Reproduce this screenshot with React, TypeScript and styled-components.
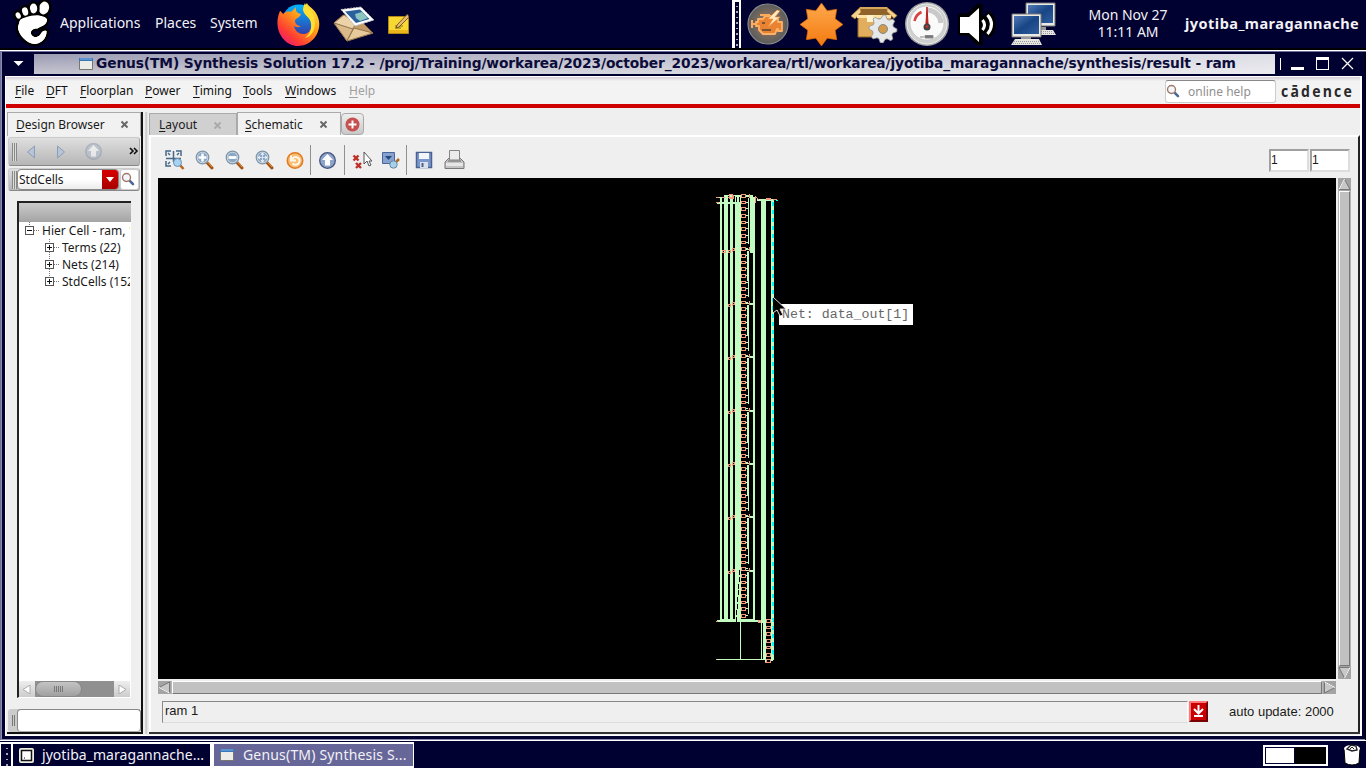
import React from 'react';
import styled, { createGlobalStyle } from 'styled-components';

const navy = '#000031';
const ui = "'Noto Sans', 'Open Sans', sans-serif";
const deja = "'DejaVu Sans', sans-serif";

const Global = createGlobalStyle`
  * { box-sizing: border-box; }
  body { margin: 0; background: ${navy}; overflow: hidden; }
  svg { display: block; flex: none; }
`;

const Desktop = styled.div`
  width: 1366px; height: 768px; display: flex; flex-direction: column;
  background: ${navy}; font-family: ${ui}; color: #1a1a1a; white-space: nowrap;
`;
const TopPanel = styled.header`
  height: 48px; flex: none; display: flex; align-items: center; color: #f2f2f6;
`;
const Space = styled.div<{ $w?: number }>`
  ${p => (p.$w === undefined ? 'flex: 1;' : `flex: none; width: ${p.$w}px;`)}
`;
const PanelItem = styled.span<{ $w: number }>`
  width: ${p => p.$w}px; flex: none; font-size: 14px; line-height: 20px; margin-top: -3px;
`;
const Grip = styled.div`
  width: 9px; height: 48px; border: solid #fff; border-width: 2px 2px 0 3px; flex: none;
  background: repeating-linear-gradient(${navy} 0 4px, #aab 4px 5.5px); background-size: 2px 100%;
  background-repeat: no-repeat; background-position: 1px 0; background-color: ${navy};
`;
const Clock = styled.div`
  width: 86px; text-align: center; font-size: 14px; line-height: 17px; margin-top: -3px;
`;
const User = styled.b`
  width: 181px; font-size: 14.5px; line-height: 20px; margin-top: -3px; letter-spacing: 0.47px;
`;

const Frame = styled.section`
  height: 692px; flex: none; display: flex; flex-direction: column;
  border-top: 2px solid #000; padding: 4px 4px 4px 5px;
  background: ${navy};
  box-shadow: inset 0 1px #fff, inset 1px 2px #6f6f9b, inset -1px 0 #000, inset 2px 0 #8c8cae, inset 0 -1px #8c8cae;
`;
const TitleBar = styled.div`
  height: 20px; flex: none; display: flex; align-items: center;
`;
const TitleStrip = styled.div`
  width: 1241px; flex: none; height: 20px; display: flex; align-items: center; padding-left: 45px;
  background: linear-gradient(90deg, #8d8d9f00, #ffffffa8), linear-gradient(#9c9cb4, #c5c5d0);
  color: #0c0c3a; font: bold 13.8px/20px ${deja};
`;
const TitleText = styled.span`margin: -2px 0 0 3px; letter-spacing: -0.137px;`;
const Client = styled.div`
  flex: 1; min-height: 0; margin-top: 2px; display: flex; flex-direction: column;
  background: #efefef; border: 1px solid #fff; border-width: 1px 2px 1px 1px;
`;
const MenuBar = styled.nav`
  height: 27px; flex: none; display: flex; align-items: center; padding-left: 9px;
  background: linear-gradient(#d6ced8, #f3f3f3 4px);
`;
const Menu = styled.span<{ $w: number; $off?: boolean }>`
  width: ${p => p.$w}px; flex: none; font-size: 12px; line-height: 17px;
  color: ${p => (p.$off ? '#a0a0a0' : '#111')};
  &::first-letter { text-decoration: underline; text-underline-offset: 2px; }
  display: block;
`;
const HelpField = styled.div`
  width: 111px; height: 23px; display: flex; align-items: center; background: #fff; border: 1px solid #ccc;
  border-top: 1px solid #888; border-radius: 3px; color: #909090; font-size: 12px; margin-top: 2px;
`;
const Logo = styled.span`
  width: 84px; padding-left: 5px; display: inline-block; font: bold 16.5px/18px 'Open Sans', sans-serif;
  letter-spacing: 2.6px; color: #282828; transform: scaleX(.85); transform-origin: 5px 0;
`;
const Red = styled.div`height: 4px; flex: none; background: #cf0000;`;
const Panes = styled.div`flex: 1; min-height: 0; display: flex; padding: 4px 0 0 1px;`;
const LeftPane = styled.aside`
  width: 136px; flex: none; display: flex; flex-direction: column; height: 622px; border-right: 2px solid #111;
  border-bottom: 2px solid #111;
`;
const Divider = styled.div`
  width: 6px; flex: none; height: 622px; background: linear-gradient(90deg, #eee 1px, #eee 2px, #bbb 3px, #ddd 4px, #eee 5px);
`;
const Tab = styled.div<{ $w: number; $idle?: boolean; $pad?: string; $h?: number }>`
  width: ${p => p.$w}px; height: ${p => p.$h ?? 24}px; flex: none; display: flex; align-items: center;
  align-self: flex-end; justify-content: space-between; padding: ${p => p.$pad ?? '0 11px 0 8px'}; font-size: 12px; line-height: 18px;
  border: 1px solid #aaa; border-bottom: 0; background: ${p => (p.$idle ? '#d0d0d0' : '#f1f1f1')};
`;
const TabName = styled.span`
  display: block;
  &::first-letter { text-decoration: underline; text-underline-offset: 2px; }
`;
const SideBar = styled.div<{ $h: number }>`
  height: ${p => p.$h}px; flex: none; display: flex; align-items: center; margin: 1px 1px 1px 1px;
  background: linear-gradient(#dedede, #b6b6b6); border: 1px solid #999; border-color: #ccc #aaa #888 #ccc;
  border-radius: 3px; padding-left: 3px;
`;
const Ridge = styled.i`
  width: 5px; height: 18px; flex: none;
  background: repeating-linear-gradient(90deg, #888 0 1px, #ddd 1px 2px);
`;
const Combo = styled.div`
  width: 102px; height: 21px; flex: none; display: flex; border: 1px solid #888; border-radius: 4px; overflow: hidden;
  background: linear-gradient(#fff, #fff 50%, #ececec); font-size: 12px; line-height: 19px; justify-content: space-between;
  padding-left: 1px;
`;
const ComboButton = styled.i`
  width: 16px; background: linear-gradient(#d80000, #a80000); display: flex; align-items: center; justify-content: center;
`;
const FindButton = styled.div`
  width: 19px; height: 21px; margin-left: 1px; background: #fff; border: 1px solid #ccc; border-radius: 3px; flex: none;
`;
const TreeBox = styled.div`
  width: 114px; height: 497px; margin: 9px 0 0 10px; flex: none; display: flex; flex-direction: column;
  border: 2px solid #222; border-width: 2px 0 0 2px; background: #fff; overflow: hidden;
  border-bottom: 1px solid #fff;
`;
const TreeHead = styled.div`height: 19px; flex: none; background: linear-gradient(#cacaca, #a4a4a4);`;
const TreeRow = styled.div<{ $depth: number }>`
  height: 17px; flex: none; display: flex; align-items: center; padding-left: ${p => 5 + p.$depth * 20}px;
  font-size: 12px; line-height: 17px; margin-right: 1px; overflow: hidden;
`;
const TreeScroll = styled.div`
  height: 16px; margin: auto 1px 0 0; display: flex; align-items: stretch; background: #909090;
`;
const ScrollButton = styled.div`
  width: 16px; background: linear-gradient(#eee, #ccc); display: flex; align-items: center; justify-content: center;
`;
const Thumb = styled.div`
  width: 47px; border: 1px solid #888; border-radius: 8px; background: linear-gradient(#c4c4c4, #a0a0a0);
  display: flex; align-items: center; justify-content: center;
`;
const Entry = styled.div`
  display: flex; align-items: center; height: 23px; margin: 11px 0 0 1px; padding-left: 4px;
  background: linear-gradient(90deg, #ccc, #bbb); border-radius: 3px;
`;
const EntryField = styled.div`
  flex: 1; height: 23px; margin-left: 1px; background: #fff; border: 1px solid #888; border-radius: 4px; border-bottom-color: #aaa;
`;

const RightPane = styled.main`
  width: 1211px; flex: none; height: 622px; display: flex; flex-direction: column; border-bottom: 2px solid #333;
`;
const Tabs = styled.div`height: 23px; flex: none; display: flex;`;
const AddTab = styled.div`
  width: 23px; height: 22px; margin: 1px 0 0 0; border: 1px solid #aaa; border-radius: 4px; display: flex; align-items: center;
  justify-content: center; background: linear-gradient(#efefef, #c8c8c8);
`;
const Work = styled.div`
  flex: 1; min-height: 0; border: solid #fff; border-width: 2px 0 0 2px; padding: 0 0 0 7px;
  border-right: 2px solid #222; display: flex; flex-direction: column;
`;
const Tools = styled.div`height: 41px; flex: none; display: flex; align-items: center; padding: 5px 8px 0 6px;`;
const Tool = styled.div<{ $w?: number }>`width: ${p => p.$w ?? 30}px; flex: none;`;
const Rule = styled.div`width: 1px; height: 30px; background: #909090; margin-right: 7px; flex: none;`;
const NumberField = styled.div`
  width: 40px; height: 23px; border: 2px solid #ddd; border-color: #a0a0a0 #ddd #ddd #a0a0a0; background: #fff;
  font: 12px/19px 'Liberation Sans', sans-serif; padding-left: 0; margin-left: 1px;
`;
const CanvasRow = styled.div`display: flex; height: 501px; flex: none;`;
const Canvas = styled.div`width: 1178px; flex: none; height: 501px; background: #000; position: relative;`;
const Tip = styled.div`
  position: absolute; left: 621px; top: 126px; width: 134px; height: 21px; background: #fff; color: #666;
  font: 13.25px/21px 'Liberation Mono', monospace; padding-left: 3px;
`;
const Cursor = styled.svg`position: absolute; left: 614px; top: 118px;`;
const VScroll = styled.div`
  width: 13px; height: 501px; margin-left: 2px; background: #b5b5b5; display: flex; flex-direction: column; justify-content: space-between;
`;
const HScroll = styled.div`
  width: 1178px; height: 13px; margin-top: 2px; background: #b5b5b5; display: flex; justify-content: space-between; flex: none;
`;
const Bar = styled.div`
  flex: 1; background: #c1c1c1; border: 1px solid #fff; border-right-color: #777; border-bottom-color: #777; margin: 0 1px;
`;
const Status = styled.div`
  display: flex; align-items: center; padding: 6px 0 0 4px; height: 29px;
  font: 13px/19px 'Liberation Sans', sans-serif;
`;
const StatusField = styled.div`
  width: 1026px; height: 22px; line-height: 18px; border: 1px solid #999; border-color: #888 #fff #ddd #888; padding-left: 2px;
`;
const Download = styled.div`
  width: 19px; height: 21px; background: #c80000; border: 2px solid #f77; border-color: #f77 #700 #700 #f77; margin: -1px 21px 0 1px;
`;

const Taskbar = styled.footer`
  height: 28px; flex: none; display: flex; align-items: center; border-top: 1px solid #fff; color: #f2f2f6;
  padding-top: 1px;
`;
const TaskGroup = styled.div`
  display: flex; height: 26px; width: 414px; border: 2px solid #fff; border-left-width: 1px; border-right-width: 1px;
`;
const TaskGrip = styled.i`
  width: 12px; flex: none; border-right: 2px solid #fff;
  background: repeating-linear-gradient(${navy} 0 4px, #aab 4px 5.5px) 5px 0 / 2px 100% no-repeat;
`;
const Task = styled.div<{ $w: number; $on?: boolean }>`
  width: ${p => p.$w}px; flex: none; display: flex; align-items: center; gap: ${p => (p.$on ? 9 : 8)}px; padding-left: 6px;
  font-size: 14px; line-height: 20px; letter-spacing: ${p => (p.$on ? 0.18 : 0.05)}px;
  background: ${p => (p.$on ? '#666698' : navy)}; border-left: ${p => (p.$on ? '4px solid #fff' : '0')};
`;
const Pager = styled.div`
  width: 65px; height: 21px; border: 2px solid #fff; display: flex; margin-right: 14px; background: #000;
`;
const PagerWindow = styled.i`width: 30px; background: #fff; border: 1px solid #003; `;

const Foot = () => (
  <svg width="60" height="48" viewBox="0 0 60 48">
    <g stroke="#000" strokeWidth="5" fill="#fff" strokeLinejoin="round" paintOrder="stroke">
      <path d="M20 20C26 15 44 13 47 19.500c0 6-7 7-9.500 9C33 28 30 31 31 34c2 4 6 4 9 1 2-4 4-5 6.500-4C47 38 41 44 34 44 26 43 18 34 18 27z" />
      <ellipse cx="44" cy="8" rx="5" ry="6.500" transform="rotate(15 44 8)" />
      <ellipse cx="33.500" cy="8.500" rx="3.700" ry="5" /><ellipse cx="25" cy="11.500" rx="3" ry="4.200" transform="rotate(-15 25 11)" />
      <ellipse cx="18" cy="15.500" rx="2.400" ry="3.300" transform="rotate(-25 18 15)" />
    </g>
    <path fill="#fff" d="M20 20C26 15 44 13 47 19.500c0 6-7 7-9.500 9C33 28 30 31 31 34c2 4 6 4 9 1 2-4 4-5 6.500-4C47 38 41 44 34 44 26 43 18 34 18 27z" />
  </svg>
);
const Firefox = () => (
  <svg width="44" height="45" viewBox="0 0 44 45">
    <defs>
      <linearGradient id="ff" x1=".9" y1="0" x2=".1" y2="1"><stop offset="0" stopColor="#fff04a" /><stop offset=".4" stopColor="#ff9a16" /><stop offset=".75" stopColor="#ff3a35" /><stop offset="1" stopColor="#e31587" /></linearGradient>
      <linearGradient id="fb" x1="0" y1="0" x2="0" y2="1"><stop offset="0" stopColor="#00b4ff" /><stop offset="1" stopColor="#3a2a9c" /></linearGradient>
    </defs>
    <circle cx="23" cy="20" r="17.500" fill="url(#fb)" />
    <path fill="url(#ff)" d="M4 9c1 0 2 2 3 3 2-2 5-3 8-2l5-5c-1 4 1 6 5 7-1 4-6 4-6 7 0 3 3 5 6 5-3 2-5 1-7 0 1 5 5 8 9 8 6 0 10-5 8-13-1-5-7-5-7-11 0-3 1-5 3-7 1 4 10 6 12 18 2 13-8 25-21 25C8 44-4 27 4 9z" />
    <path fill="#ffdf32" d="M29 1c1 5 10 7 10 20 0 9-5 14-10 15 7-5 7-13 5-18-2-4-6-5-7-10 0-3 1-5 2-7z" />
  </svg>
);
const Mail = () => (
  <svg width="42" height="36" viewBox="0 0 42 36">
    <path d="M1 17L10 9l20 8 10 10-26 8z" fill="#c39b66" stroke="#80603a" />
    <path d="M1 17l10-8 12 8-4 7z" fill="#ecd2a8" stroke="#a58458" />
    <path d="M1 17l13 18 6-12z" fill="#dab98a" stroke="#92754e" />
    <path d="M14 35l7-13 19 5z" fill="#e7c99b" stroke="#92754e" />
    <path d="M8 3.500L28 1l13 13-19 6z" fill="#fff" stroke="#bbb" strokeDasharray="2 1" />
    <path d="M12 5.500L27 3.500l9.500 9.500L23 17z" fill="#2b609c" />
    <path d="M22 8l7-2 6 6-8 3-4-3z" fill="#8cc4bf" />
  </svg>
);
const Note = () => (
  <svg width="22" height="21" viewBox="0 0 22 21"><path d="M.5 2.500h20v17H.500z" fill="#f7d733" stroke="#b28711" /><path d="M1 16h19v3H1z" fill="#edb51c" /><path d="M7 12h8M7 14h6" stroke="#877016" /><path d="M19.500 0L9 11l-1 3 3-1L21 3z" fill="#e8b86d" stroke="#594119" strokeWidth=".8" /></svg>
);
const Engine = () => (
  <svg width="42" height="44" viewBox="0 0 42 44">
    <defs><radialGradient id="en"><stop offset="0" stopColor="#c98a58" /><stop offset=".55" stopColor="#7b6a5e" /><stop offset="1" stopColor="#5a5c5c" /></radialGradient></defs>
    <circle cx="21" cy="22" r="20" fill="url(#en)" stroke="#888" strokeWidth="1.200" />
    <path d="M11 17h5l2-3h7l3 3h3v3h4v9h-4v-2h-1l-2 5H16l-4-4v-4H9v-4h2z" fill="#e98331" stroke="#ffb267" strokeWidth="1.800" strokeLinejoin="round" />
    <path d="M5 18v8M5 22h4M13 13h10" stroke="#ffab5a" strokeWidth="2" fill="none" />
    <path d="M30 8l-9 9h5l-5 8 12-10h-5l5-6z" fill="#ffe9bd" stroke="#f0913f" strokeWidth=".7" /><path d="M15 21h3M15 28h9" stroke="#7a5234" strokeWidth="2" />
  </svg>
);
const Star = () => {
  const pts = Array.from({ length: 16 }, (_, i) => {
    const r = i % 2 ? 14.5 : 21, a = (i * Math.PI) / 8 - Math.PI / 2;
    return `${21 + r * Math.cos(a)},${21 + r * Math.sin(a)}`;
  }).join(' ');
  return <svg width="43" height="43" viewBox="0 0 42 42"><defs><linearGradient id="st" x2="0" y2="1"><stop stopColor="#fda94d" /><stop offset="1" stopColor="#f47a10" /></linearGradient></defs><polygon points={pts} fill="url(#st)" stroke="#d66408" strokeWidth=".7" /></svg>;
};
const gear = (cx: number, cy: number, r: number) => Array.from({ length: 32 }, (_, i) => {
  const rr = i % 4 < 2 ? r : r * 0.76, a = (i * Math.PI) / 16;
  return `${cx + rr * Math.cos(a)},${cy + rr * Math.sin(a)}`;
}).join(' ');
const Package = () => (
  <svg width="48" height="38" viewBox="0 0 48 38">
    <path d="M8 10h33v22H8z" fill="#e0ae5c" stroke="#94651f" /><path d="M10 3h27l5 8H6z" fill="#8f6329" />
    <path d="M10 2.500L1 11l4 3 6-7zM37 2.500l10 8-3 3-7-7z" fill="#f4d28e" stroke="#a7762b" strokeWidth=".8" /><path d="M10 2h27v2H10z" fill="#d6a75b" /><path d="M7 10h34v3H7z" fill="#ffe2a4" /><path d="M17 10h6v7h-6z" fill="#fff2ce" />
    <polygon points={gear(33, 24, 14)} fill="#e6e8ea" stroke="#95989a" strokeWidth=".8" /><circle cx="33" cy="24" r="4.500" fill="#d19b4b" stroke="#85888a" />
  </svg>
);
const Gauge = () => (
  <svg width="46" height="46" viewBox="0 0 46 46"><circle cx="23" cy="23" r="22" fill="#a2a4a4" /><circle cx="23" cy="23" r="20" fill="#cfd1d0" stroke="#eee" /><circle cx="23" cy="22" r="17" fill="#fafafa" stroke="#bbb" strokeWidth=".6" />
    <path d="M24 9a14 14 0 0113 13" stroke="#c9c9c9" strokeWidth="5" fill="none" /><path d="M10.500 20a13 13 0 017-9" stroke="#d8413f" strokeWidth="2.600" fill="none" />
    <path d="M21.700 27L23 6l1.300 21z" fill="#bb1c1c" stroke="#bb1c1c" /><circle cx="23" cy="26" r="3.500" fill="#444" /><circle cx="23" cy="25.500" r="1.500" fill="#b33" /><path d="M21 34.500h8v2.500h-8zM16 36h4" fill="#777" stroke="#888" /></svg>
);
const Sound = () => (
  <svg width="42" height="44" viewBox="0 0 42 44"><g stroke="#000" strokeWidth="7" fill="none" strokeLinejoin="round" strokeLinecap="round"><path d="M3 15h8L21 5v35L11 30H3z" /><path d="M26 17q4 5 0 11M31 13q7 9 0 19" /></g><path d="M2 15h9L21 6v34L11 31H2z" fill="#fff" /><path d="M24.500 18q4 5 0 10M29.500 13q8 9 0 19" stroke="#fff" strokeWidth="3" fill="none" /></svg>
);
const Net = () => (
  <svg width="46" height="44" viewBox="0 0 46 44"><defs><linearGradient id="sc" x2="1" y2="1"><stop stopColor="#5379b5" /><stop offset=".5" stopColor="#174585" /><stop offset="1" stopColor="#315f9d" /></linearGradient></defs>
    <g><path d="M15 1h29v23H15z" fill="#e9e9e6" stroke="#777" /><path d="M17 3h25v18H17z" fill="url(#sc)" /><path d="M25 25h10v3H25z" fill="#999" /><path d="M21 28h21l3 5H19z" fill="#e6e6e3" /><path d="M22 29.500h20M22 31.500h21" stroke="#999" strokeDasharray="1 1" /></g>
    <path d="M1 12h29v23H1z" fill="#e9e9e6" stroke="#777" /><path d="M3 14h25v18H3z" fill="url(#sc)" /><path d="M10 35h10v3H10z" fill="#999" /><path d="M4 37h24l3 6H0z" fill="#e6e6e3" /><path d="M3 39.500h25M2 41.500h27" stroke="#999" strokeDasharray="1 1" />
  </svg>
);
const WinIcon = () => <svg width="14" height="12" viewBox="0 0 14 12"><path d="M.5.500h13v11H.500z" fill="#ecece9" stroke="#77776f" /><path d="M0 0h14v3H0z" fill="#3c78b8" /><path d="M1 1h12" stroke="#7ab0e8" /></svg>;
const Controls = () => (
  <svg width="86" height="20" viewBox="0 0 86 20" shapeRendering="crispEdges"><path d="M5.500 4v12" stroke="#fff" /><path d="M16 13h13v3H16z" fill="#fff" /><path d="M41 3h13v13H41zM42 6h11v9H42z" fill="#fff" fillRule="evenodd" /><path d="M67 4l11 11m0-11L67 15" stroke="#fff" shapeRendering="auto" strokeWidth="1.200" /></svg>
);
type Mark = 'plus' | 'minus' | 'fit' | '';
const Magnifier = ({ s = 20, mark = '' }: { s?: number; mark?: Mark }) => (
  <svg width={s} height={s} viewBox="0 0 20 20">
    <path d="M12 12.500l5 5.500" stroke="#a45312" strokeWidth="3" strokeLinecap="round" /><path d="M12.500 12l4.500 5" stroke="#dd9242" strokeWidth="1" />
    <circle cx="7.500" cy="7.500" r="6.300" fill="#dce7f0" stroke="#7d93a6" strokeWidth="1.200" />
    {mark && <circle cx="7.500" cy="7.500" r="5" fill="#8ca7c4" />}
    {mark === 'plus' && <path d="M3.500 7.500h8M7.500 3.500v8" stroke="#fff" strokeWidth="2.500" />}
    {mark === 'minus' && <path d="M3.500 7.500h8" stroke="#fff" strokeWidth="2.800" />}
    {mark === 'fit' && <><path d="M7.500 2.500l2 2.300h-4zM7.500 12.500l2-2.300h-4zM2.500 7.500l2.300-2v4zM12.500 7.500l-2.300-2v4z" fill="#fff" /><path d="M7.500 4v7M4 7.500h7" stroke="#d4e3ef" /></>}
  </svg>
);
const SmallLens = () => <svg width="18" height="19" viewBox="0 0 18 19"><path d="M8.800 10.800l3.200 3.400" stroke="#4a6799" strokeWidth="2.500" strokeLinecap="round" /><circle cx="5.500" cy="7.500" r="4" fill="#f4f6fa" stroke="#a0786c" strokeWidth="1.400" /></svg>;
const FitAll = () => (
  <svg width="22" height="22" viewBox="0 0 22 22"><g fill="none" stroke="#466987" strokeWidth="1.500"><path d="M2 7V2h5M12 2h5v5M2 12v5h5M2 9.500h4M9.500 2v4M9.500 6v7M6 9.500h7M6 6l-2-2M13 6l2-2M6 13l-2 2M17 9.500h-4" /></g><path d="M16 16l3.500 4" stroke="#b76520" strokeWidth="2.500" /><circle cx="13.500" cy="13.500" r="4" fill="#a7d3f2" stroke="#6a8ead" /></svg>
);
const Undo = () => <svg width="19" height="19" viewBox="0 0 19 19"><circle cx="9" cy="9.500" r="7.700" fill="#f9bd78" stroke="#e07c1e" strokeWidth="1.600" /><path d="M5 4.500v5h5M6 8.500c2-4 8-2.500 7.500 1.500-.3 3.500-4.500 5-7 2.500" fill="none" stroke="#fff6e6" strokeWidth="2" /></svg>;
const Up = ({ faint }: { faint?: boolean }) => <svg width="19" height="19" viewBox="0 0 19 19" opacity={faint ? 0.6 : 1}><circle cx="9.500" cy="9.500" r="7.800" fill={faint ? '#b3bccb' : '#8fa4cb'} stroke={faint ? '#8f9bb0' : '#45557f'} strokeWidth="1.300" /><path d="M9.500 3L4 9h3v5.500h5V9h3z" fill="#fff" /></svg>;
const Deselect = () => <svg width="20" height="22" viewBox="0 0 20 22"><path d="M1.500 6.500l5 5M6.500 6.500l-5 5M4 14l5 5M9 14l-5 5" stroke="#bd3029" strokeWidth="2.400" /><path d="M12 3v12l3-3 2 5 2-1-2-4h3z" fill="#fff" stroke="#555" /></svg>;
const Probe = () => <svg width="20" height="20" viewBox="0 0 20 20"><path d="M2.500 2.500h12v11h-12z" fill="#86a3d0" stroke="#4d6699" /><path d="M5 6l3.500 4L12 6z" fill="#24477f" /><path d="M15 13l4-4" stroke="#b46a23" strokeWidth="2.500" /><circle cx="13.500" cy="14.500" r="3.700" fill="#a6d1e9" stroke="#6387a5" /></svg>;
const Save = () => <svg width="18" height="18" viewBox="0 0 18 18"><path d="M1.500 1.500h15v15h-15z" fill="#7b96ca" stroke="#4b6191" strokeWidth="1.500" /><path d="M4 2h10v6H4z" fill="#f2f5fa" /><path d="M5 11h8v6H5z" fill="#dae0e9" /><path d="M6.500 12h2v4h-2z" fill="#49628e" /></svg>;
const Print = () => <svg width="21" height="20" viewBox="0 0 21 20"><path d="M1 12l4-4h11l4 4v6.500H1z" fill="#c2c2c2" stroke="#777" /><path d="M5.500.500h10v9.500h-10z" fill="#ececec" stroke="#858585" /><path d="M2 13h17v3H2z" fill="#e6e6e6" /><path d="M4 11h13" stroke="#888" strokeWidth="1.500" /></svg>;
const CloseX = ({ light }: { light?: boolean }) => <svg width="9" height="9" viewBox="0 0 9 9"><path d="M1.500 1.500l6 6M7.500 1.500l-6 6" stroke={light ? '#aaa' : '#666'} strokeWidth="1.900" /></svg>;
const Node = ({ open, last }: { open?: boolean; last?: boolean }) => (
  <svg width="18" height="17" viewBox="0 0 18 17" shapeRendering="crispEdges"><path d={`M5.500 0v4M10 8.500h5${open || last ? '' : 'M5.500 13v4'}`} stroke="#777" strokeDasharray="1 1" /><path d="M1.500 4.500h8v8h-8z" fill="#fff" stroke="#555" /><path d={`M3 8.500h5${open ? '' : 'M5.500 6v5'}`} stroke="#111" /></svg>
);
const Arrow = ({ dir }: { dir: number }) => (
  <svg width="13" height="13" viewBox="0 0 13 13"><g transform={`rotate(${dir} 6.500 6.500)`}><path d="M0 0h13v13H0z" fill="#a4a4a4" /><path d="M1 11.500L6.500 1 12 11.500z" fill="#c8c8c8" stroke="#777" /><path d="M1 11.500L6.500 1" stroke="#fff" /></g></svg>
);
const Terminal = () => <svg width="15" height="15" viewBox="0 0 15 15"><rect width="15" height="15" rx="2" fill="#efefe6" /><path d="M2.500 2.500h10v10h-10z" fill="#fff" stroke="#111" strokeWidth="1.500" /><path d="M5 10h1" stroke="#111" /></svg>;
const Trash = () => <svg width="20" height="22" viewBox="0 0 20 22"><path d="M2 4h16l-1 15q-7 4-14 0z" fill="#fff" stroke="#000" /><ellipse cx="10" cy="4.500" rx="8" ry="3.500" fill="#fff" /><path d="M5 5l4-4 5 1 1 4-5 1z" fill="#fff" stroke="#222" strokeWidth="1.400" /><path d="M8 5l2-2 2 2" fill="none" stroke="#222" /></svg>;

const green = '#c1fdc1';
const salmon = '#f79a7c';
const cyan = '#00fdfd';
const Box = ({ x, y, h }: { x: number; y: number; h: number }) => (
  <g><rect x={x} y={y} width="5" height={h} fill={salmon} /><rect x={x + 1} y={y + 1} width="3" height={h - 2} fill="#000" /></g>
);
const cellRows = (count: number, start: number, pitch: number) =>
  Array.from({ length: count }, (_, i) => {
    const h = i % 3 === 1 ? 3 : 4;
    return { y: Math.round(start + i * pitch - h / 2), h };
  });
const Schematic = () => {
  const rows = cellRows(64, 195.6, 6.67);
  const tops = Array.from({ length: 8 }, (_, i) => Math.round(196 + i * 53.4));
  const dashes = Array.from({ length: 57 }, (_, i) => 202 + i * 8);
  const bars: [number, number, number, number][] = [
    [720, 197, 2, 425], [724, 195, 4, 427], [730, 196, 3, 425], [735, 195, 6, 425], [750, 197, 3, 56], [753, 197, 2, 423],
    [761, 199, 5, 424], [761, 622, 1, 38], [763, 622, 2, 38], [765, 622, 1, 40], [771, 199, 3, 461],
    [717, 197, 5, 1], [717, 202, 18, 2], [728, 195, 12, 1], [746, 195, 7, 1], [757, 199, 16, 2],
    [720, 619, 35, 1], [717, 620, 43, 2], [740, 621, 1, 38], [717, 659, 48, 1],
  ];
  return (
    <svg width="1178" height="501" viewBox="158 178 1178 501" shapeRendering="crispEdges">
      {bars.map((b, i) => <rect key={i} x={b[0]} y={b[1]} width={b[2]} height={b[3]} fill={green} />)}
      {tops.map((y, i) => (
        <g key={i} fill={green}>
          <rect x="748" y={y + 2} width="1" height={i === 7 ? 42 : 46} /><rect x="746" y={y} width="7" height="1" />
          {i > 0 && <rect x="747" y={y + 2} width="1" height="30" />}
          <rect x="749" y={y - 2} width="1" height="4" fill={salmon} />
          {i > 0 && <rect x="750" y={y} width="3" height="2" />}
        </g>
      ))}
      {rows.map(({ y, h }, i) => <g key={y}><rect x="746" y={y + 1} width="2" height="1" fill={green} /><Box x={741} y={y} h={h} />{i >= 56 && <rect x={739 - Math.floor((i - 56) / 2)} y={y + 3} width="1" height="5" fill="#000" />}</g>)}
      {tops.slice(1).map((y, i) => <g key={y} fill="none" stroke={salmon}><path d={`M728.500 ${y + 1.500}h2v2h-2zM732.500 ${y - 0.500}h2v2h-3M732.500 ${y - 1}v4`} />{i === 0 && <path d={`M722.500 ${y + 1.500}h3v2h-3z`} />}</g>)}
      <path d="M716 197.500h3M716 202.500h3M722 197.500h3M729 194.500h3v4h-3zM728 197.500h5M733 195v4M755.500 196v7M756 197.500l3 2M766 198.500h4v1h-4zM773 199.500h4" stroke={salmon} fill="none" />
      <path d="M736.500 197v5M739.500 197v5" stroke="#000" />
      {dashes.map(y => <rect key={y} x="772" y={y} width="2" height="4" fill={cyan} />)}
      <path d="M770 654.500h4M776 200.500h2" stroke={cyan} />
      {cellRows(7, 621, 6.7).map(({ y, h }) => <g key={y}><Box x={766} y={y} h={h} /><path d={`M771 ${y + 1.500}h2`} stroke={green} /></g>)}
      <path d="M716 621.500h2M716 659.500h1M765 662.500h1M758.500 620.500h2v2h-2z" stroke={salmon} fill="none" />
    </svg>
  );
};

export default function App() {
  return (
    <Desktop>
      <Global />
      <TopPanel>
        <Foot />
        <PanelItem $w={95}>Applications</PanelItem><PanelItem $w={55}>Places</PanelItem><PanelItem $w={66}>System</PanelItem>
        <Firefox /><Space $w={13} /><Mail /><Space $w={13} /><Note /><Space />
        <Grip /><Space $w={6} /><Engine /><Space $w={11} /><Star /><Space $w={7} /><Package /><Space $w={6} /><Gauge /><Space $w={8} /><Sound /><Space $w={11} /><Net />
        <Space $w={28} /><Clock>Mon Nov 27<br />11:11 AM</Clock><Space $w={14} /><User>jyotiba_maragannache</User>
      </TopPanel>
      <Frame>
        <TitleBar>
          <svg width="29" height="20" viewBox="0 0 29 20"><path d="M8.500 7h10l-5 5z" fill="#fff" /></svg>
          <TitleStrip><WinIcon /><TitleText>Genus(TM) Synthesis Solution 17.2 - /proj/Training/workarea/2023/october_2023/workarea/rtl/workarea/jyotiba_maragannache/synthesis/result - ram</TitleText></TitleStrip>
          <Controls />
        </TitleBar>
        <Client>
          <MenuBar>
            <Menu $w={31}>File</Menu><Menu $w={34}>DFT</Menu><Menu $w={65}>Floorplan</Menu><Menu $w={48}>Power</Menu><Menu $w={50}>Timing</Menu><Menu $w={42}>Tools</Menu><Menu $w={64}>Windows</Menu><Menu $w={40} $off>Help</Menu>
            <Space />
            <HelpField><SmallLens /><Space $w={4} />online help</HelpField><Logo>cādence</Logo>
          </MenuBar>
          <Red />
          <Panes>
            <LeftPane>
              <Tab $w={134}><TabName>Design Browser</TabName><CloseX /></Tab>
              <SideBar $h={29}>
                <Ridge /><Space $w={9} />
                <svg width="10" height="14" viewBox="0 0 10 14"><path d="M8.500 1v12L1.500 7z" fill="#b5c4d8" stroke="#8d9db2" /></svg><Space $w={20} />
                <svg width="10" height="14" viewBox="0 0 10 14"><path d="M1.500 1v12l7-6z" fill="#b5c4d8" stroke="#8d9db2" /></svg><Space $w={18} />
                <Up faint /><Space />
                <svg width="10" height="9" viewBox="0 0 10 9"><path d="M1 1l3 3-3 3M5 1l3 3-3 3" fill="none" stroke="#111" strokeWidth="1.600" /></svg>
              </SideBar>
              <SideBar $h={23}>
                <Ridge /><Combo>StdCells<ComboButton><svg width="8" height="5"><path d="M0 0h8L4 5z" fill="#fff" /></svg></ComboButton></Combo><FindButton><SmallLens /></FindButton>
              </SideBar>
              <TreeBox>
                <TreeHead />
                <TreeRow $depth={0}><Node open />Hier Cell - ram, 1</TreeRow>
                <TreeRow $depth={1}><Node />Terms (22)</TreeRow>
                <TreeRow $depth={1}><Node />Nets (214)</TreeRow>
                <TreeRow $depth={1}><Node last />StdCells (152)</TreeRow>
                <TreeScroll>
                  <ScrollButton><svg width="8" height="9"><path d="M7 0v9L0 4.500z" fill="#fff" stroke="#aaa" /></svg></ScrollButton>
                  <Thumb><svg width="10" height="6"><path d="M.5 0v6M2.500 0v6M4.500 0v6M6.500 0v6M8.500 0v6" stroke="#777" /></svg></Thumb><Space />
                  <ScrollButton><svg width="8" height="9"><path d="M1 0v9l7-4.500z" fill="#fff" stroke="#aaa" /></svg></ScrollButton>
                </TreeScroll>
              </TreeBox>
              <Entry><svg width="4" height="11"><path d="M.5 0v11M2.500 0v11" stroke="#777" /></svg><EntryField /></Entry>
            </LeftPane>
            <Divider />
            <RightPane>
              <Tabs>
                <Tab $w={88} $h={22} $pad="1px 14px 0 9px" $idle><TabName>Layout</TabName><CloseX light /></Tab>
                <Tab $w={104} $h={23} $pad="1px 12px 0 7px"><TabName>Schematic</TabName><CloseX /></Tab>
                <AddTab><svg width="15" height="15"><circle cx="7.500" cy="7.500" r="7" fill="#c5504f" /><path d="M3.500 7.500h8M7.500 3.500v8" stroke="#fff" strokeWidth="2" /></svg></AddTab>
              </Tabs>
              <Work>
                <Tools>
                  <Tool $w={31}><FitAll /></Tool><Tool><Magnifier mark="plus" /></Tool><Tool><Magnifier mark="minus" /></Tool><Tool $w={31}><Magnifier mark="fit" /></Tool><Tool $w={24}><Undo /></Tool>
                  <Rule /><Tool $w={26}><Up /></Tool><Rule /><Tool $w={28}><Deselect /></Tool><Tool $w={26}><Probe /></Tool><Rule /><Space $w={1} /><Tool $w={29}><Save /></Tool><Tool><Print /></Tool>
                  <Space /><NumberField>1</NumberField><NumberField>1</NumberField>
                </Tools>
                <CanvasRow>
                  <Canvas>
                    <Schematic />
                    <Tip>Net: data_out[1]</Tip>
                    <Cursor width="16" height="22" viewBox="0 0 16 22"><path d="M1 1v16l4-3 3 6 3-1-3-6h6z" fill="#000" /><path d="M1 1l13 12H8l3 6-3 1-3-6-4 3" fill="none" stroke="#ddd" /></Cursor>
                  </Canvas>
                  <VScroll><Arrow dir={0} /><Bar /><Arrow dir={180} /></VScroll>
                </CanvasRow>
                <HScroll><Arrow dir={-90} /><Bar /><Arrow dir={90} /></HScroll>
                <Status>
                  <StatusField>ram 1</StatusField>
                  <Download><svg width="15" height="17"><path d="M7.500 2v7M3 6l4.500 4.500L12 6M3 13h9" stroke="#fff" strokeWidth="2" fill="none" /></svg></Download>
                  auto update: 2000
                </Status>
              </Work>
            </RightPane>
          </Panes>
        </Client>
      </Frame>
      <Taskbar>
        <TaskGroup><TaskGrip /><Task $w={197}><Terminal />jyotiba_maragannache...</Task><Task $w={203} $on><WinIcon />Genus(TM) Synthesis S...</Task></TaskGroup>
        <Space />
        <Pager><PagerWindow /></Pager><Trash /><Space $w={4} />
      </Taskbar>
    </Desktop>
  );
}
